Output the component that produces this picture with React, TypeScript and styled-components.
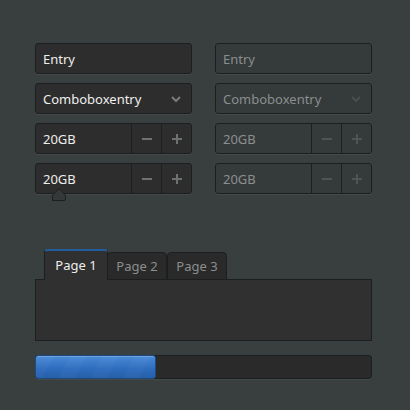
import React from "react";
import styled, { createGlobalStyle, css } from "styled-components";

const Global = createGlobalStyle`
  html, body { margin: 0; padding: 0; background: #393f3f; }
  body { font-family: "Noto Sans", "Open Sans", sans-serif; font-size: 13px; color: #eeeeec; }
  * { box-sizing: border-box; }
`;

const Page = styled.div`
  width: 410px;
  height: 410px;
  padding: 43px 38px 0 35px;
  display: flex;
  flex-direction: column;
`;

const Grid = styled.div`
  display: grid;
  grid-template-columns: 157px 157px;
  column-gap: 23px;
  row-gap: 9px;
`;

const fieldBase = css<{ $disabled?: boolean }>`
  height: 31px;
  border: 1px solid #1c1f1f;
  border-radius: 3px;
  background: ${(p) => (p.$disabled ? "#353a3a" : "#2d2d2d")};
  box-shadow: 0 1px rgba(255, 255, 255, 0.06);
  color: ${(p) => (p.$disabled ? "#8b8e8f" : "#eeeeec")};
  display: flex;
  align-items: center;
  position: relative;
`;

const Field = styled.div<{ $disabled?: boolean }>`
  ${fieldBase}
  padding-left: 7px;
`;

const Label = styled.span`
  flex: 1;
  line-height: 1;
  padding-top: 1px;
`;

const Arrow = styled.span<{ $disabled?: boolean }>`
  width: 30px;
  display: flex;
  justify-content: center;
  color: ${(p) => (p.$disabled ? "#4a4f4f" : "#7a7d7e")};
`;

const SpinBtn = styled.span<{ $disabled?: boolean }>`
  width: 30px;
  height: 100%;
  border-left: 1px solid #1c1f1f;
  display: flex;
  align-items: center;
  justify-content: center;
  color: ${(p) => (p.$disabled ? "#4e5353" : "#6d7171")};
`;

const Handle = styled.svg`
  position: absolute;
  left: 16px;
  top: 24px;
`;

const Notebook = styled.div`
  margin-top: 56px;
  display: flex;
  flex-direction: column;
`;

const Tabs = styled.div`
  display: flex;
  align-items: flex-end;
  padding-left: 9px;
  height: 30px;
  position: relative;
  z-index: 1;
  margin-bottom: -1px;
`;

const Tab = styled.div<{ $active?: boolean }>`
  height: ${(p) => (p.$active ? "31px" : "28px")};
  width: ${(p) => (p.$active ? "64px" : "60px")};
  margin-right: ${(p) => (p.$active ? "-1px" : "0")};
  border: 1px solid #1c1f1f;
  border-bottom: ${(p) => (p.$active ? "none" : "1px solid #1c1f1f")};
  border-top: ${(p) => (p.$active ? "2px solid #215d9c" : "1px solid #1c1f1f")};
  border-radius: 4px 4px 0 0;
  background: ${(p) => (p.$active ? "#303030" : "#2a2a2a")};
  color: ${(p) => (p.$active ? "#eeeeec" : "#8b8e8f")};
  display: flex;
  align-items: center;
  justify-content: center;
  padding-bottom: ${(p) => (p.$active ? "1px" : "0")};
`;

const Panel = styled.div`
  height: 62px;
  border: 1px solid #1c1f1f;
  background: #303030;
`;

const Trough = styled.div`
  margin-top: 14px;
  height: 24px;
  border: 1px solid #1c1f1f;
  border-radius: 3px;
  background: #2a2a2a;
  box-shadow: 0 1px rgba(255, 255, 255, 0.06);
  position: relative;
`;

const Fill = styled.div`
  position: absolute;
  left: -1px;
  top: -1px;
  bottom: -1px;
  border: 1px solid #1c4a80;
  border-radius: 3px;
  background: repeating-linear-gradient(
      -60deg,
      rgba(255, 255, 255, 0) 0 14px,
      rgba(255, 255, 255, 0.025) 14px 28px
    ),
    linear-gradient(#4a8ad6, #2d6bbd 60%, #275fa8);
  box-shadow: inset 0 1px rgba(255, 255, 255, 0.2);
`;

const Chevron = () => (
  <svg width="10" height="6" viewBox="0 0 10 6">
    <path d="M1 1 L5 5 L9 1" fill="none" stroke="currentColor" strokeWidth="2" />
  </svg>
);
const Minus = () => (
  <svg width="10" height="10" viewBox="0 0 10 10">
    <rect x="0" y="4" width="10" height="2" fill="currentColor" />
  </svg>
);
const Plus = () => (
  <svg width="10" height="10" viewBox="0 0 10 10">
    <rect x="0" y="4" width="10" height="2" fill="currentColor" />
    <rect x="4" y="0" width="2" height="10" fill="currentColor" />
  </svg>
);

const Spin: React.FC<{ disabled?: boolean; handle?: boolean }> = ({ disabled, handle }) => (
  <Field $disabled={disabled}>
    <Label>20GB</Label>
    <SpinBtn $disabled={disabled}><Minus /></SpinBtn>
    <SpinBtn $disabled={disabled}><Plus /></SpinBtn>
    {handle && (
      <Handle width="14" height="13" viewBox="0 0 14 13">
        <path d="M0.5 12.5 V7 L7 0.8 L13.5 7 V11 Q13.5 12.5 12 12.5 H2 Q0.5 12.5 0.5 11 Z" fill="#353838" stroke="#1c1f1f" />
      </Handle>
    )}
  </Field>
);

export default function App() {
  return (
    <>
      <Global />
      <Page>
        <Grid>
          <Field><Label>Entry</Label></Field>
          <Field $disabled><Label>Entry</Label></Field>
          <Field>
            <Label>Comboboxentry</Label>
            <Arrow><Chevron /></Arrow>
          </Field>
          <Field $disabled>
            <Label>Comboboxentry</Label>
            <Arrow $disabled><Chevron /></Arrow>
          </Field>
          <Spin />
          <Spin disabled />
          <Spin handle />
          <Spin disabled />
        </Grid>
        <Notebook>
          <Tabs>
            <Tab $active>Page 1</Tab>
            <Tab>Page 2</Tab>
            <Tab>Page 3</Tab>
          </Tabs>
          <Panel />
        </Notebook>
        <Trough>
          <Fill style={{ width: `${(122 / 337) * 100}%` }} />
        </Trough>
      </Page>
    </>
  );
}
